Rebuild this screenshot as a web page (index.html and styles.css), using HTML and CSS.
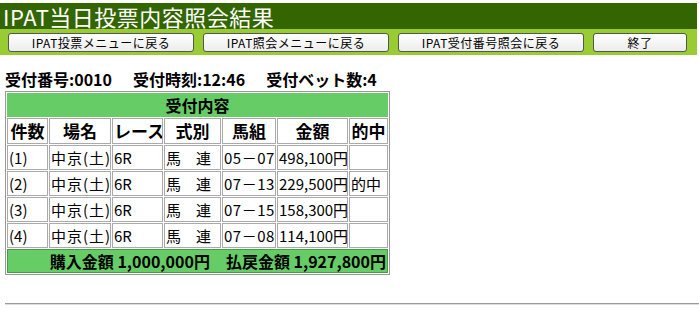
FILE: index.html
```html
<!DOCTYPE html>
<html lang="ja">
<head>
  <meta charset="UTF-8">
  <title>IPAT当日投票内容照会結果</title>
  <link rel="stylesheet" href="styles.css">
</head>
<body>

  <div class="title">IPAT当日投票内容照会結果</div>
  <div class="nav">
    <button class="btn btn-wide">IPAT投票メニューに戻る</button>
    <button class="btn btn-wide">IPAT照会メニューに戻る</button>
    <button class="btn btn-wide">IPAT受付番号照会に戻る</button>
    <button class="btn btn-short">終了</button>
  </div>

  <div class="content">
    <p class="info">
      <span>受付番号:0010</span>
      <span>受付時刻:12:46</span>
      <span>受付ベット数:4</span>
    </p>

    <table class="result">
      <colgroup>
        <col class="c-no">
        <col class="c-place">
        <col class="c-race">
        <col class="c-type">
        <col class="c-combo">
        <col class="c-amount">
        <col class="c-hit">
      </colgroup>
      <tr>
        <th class="caption" colspan="7">受付内容</th>
      </tr>
      <tr class="head">
        <th>件数</th>
        <th>場名</th>
        <th>レース</th>
        <th>式別</th>
        <th>馬組</th>
        <th>金額</th>
        <th>的中</th>
      </tr>
      <tr>
        <td>(1)</td><td class="place">中京(土)</td><td>6R</td><td>馬　連</td><td class="combo">05－07</td><td>498,100円</td><td></td>
      </tr>
      <tr>
        <td>(2)</td><td class="place">中京(土)</td><td>6R</td><td>馬　連</td><td class="combo">07－13</td><td>229,500円</td><td>的中</td>
      </tr>
      <tr>
        <td>(3)</td><td class="place">中京(土)</td><td>6R</td><td>馬　連</td><td class="combo">07－15</td><td>158,300円</td><td></td>
      </tr>
      <tr>
        <td>(4)</td><td class="place">中京(土)</td><td>6R</td><td>馬　連</td><td class="combo">07－08</td><td>114,100円</td><td></td>
      </tr>
      <tr>
        <th class="total" colspan="7">購入金額 1,000,000円　払戻金額 1,927,800円</th>
      </tr>
    </table>
  </div>

  <hr class="rule">

</body>
</html>
```

FILE: styles.css
```css
* {
  box-sizing: border-box;
}

body {
  margin: 3px 0 0;
  font-family: "Noto Sans CJK JP", "Noto Sans", sans-serif;
  color: #000;
  background: #fff;
}

.title {
  background: #336600;
  color: #fff;
  height: 26px;
  line-height: 26px;
  padding-left: 3px;
  font-size: 22px;
  letter-spacing: 0.5px;
  width: 697px;
}

.nav {
  background: #99cc33;
  height: 26px;
  width: 697px;
  display: flex;
  align-items: center;
  padding-left: 8px;
  gap: 9px;
}

.btn {
  height: 19px;
  padding: 0;
  border: 1px solid #555;
  border-radius: 3px;
  background: linear-gradient(#ffffff, #ececec);
  font-family: "Noto Sans CJK JP", sans-serif;
  font-size: 12px;
  line-height: 17px;
  letter-spacing: 0.5px;
  color: #000;
}

.btn-wide {
  width: 186px;
}

.btn-short {
  width: 94px;
}

.content {
  padding: 0 5px;
}

.info {
  margin: 15px 0 2px;
  font-size: 16px;
  font-weight: bold;
  line-height: 19px;
  display: flex;
  gap: 21px;
}

.result {
  table-layout: fixed;
  width: 385px;
  border: 1px solid #999;
  border-spacing: 1px;
  font-size: 15px;
  line-height: 20px;
}

.result th,
.result td {
  border: 1px solid #aaa;
  height: 25px;
  padding: 0 1px;
  white-space: nowrap;
  overflow: hidden;
}

.result th {
  font-size: 17px;
  text-align: center;
}

.result td {
  text-align: left;
}

.result .head th {
  height: 26px;
}

.result td.place {
  letter-spacing: 1px;
}

.result td.combo {
  letter-spacing: 0.5px;
}

.result .caption {
  background: #66cc66;
  border-color: #66cc66;
  height: 24px;
  font-size: 16px;
}

.result .total {
  background: #66cc66;
  text-align: right;
  height: 24px;
  font-size: 16px;
  border-color: #4a994a;
}

.c-no { width: 41px; }
.c-place { width: 62px; }
.c-race { width: 51px; }
.c-type { width: 57px; }
.c-combo { width: 54px; }
.c-amount { width: 71px; }

.rule {
  margin: 28px 0 0 5px;
  border: 0;
  border-top: 1px solid #999;
  border-bottom: 1px solid #ddd;
}
```
